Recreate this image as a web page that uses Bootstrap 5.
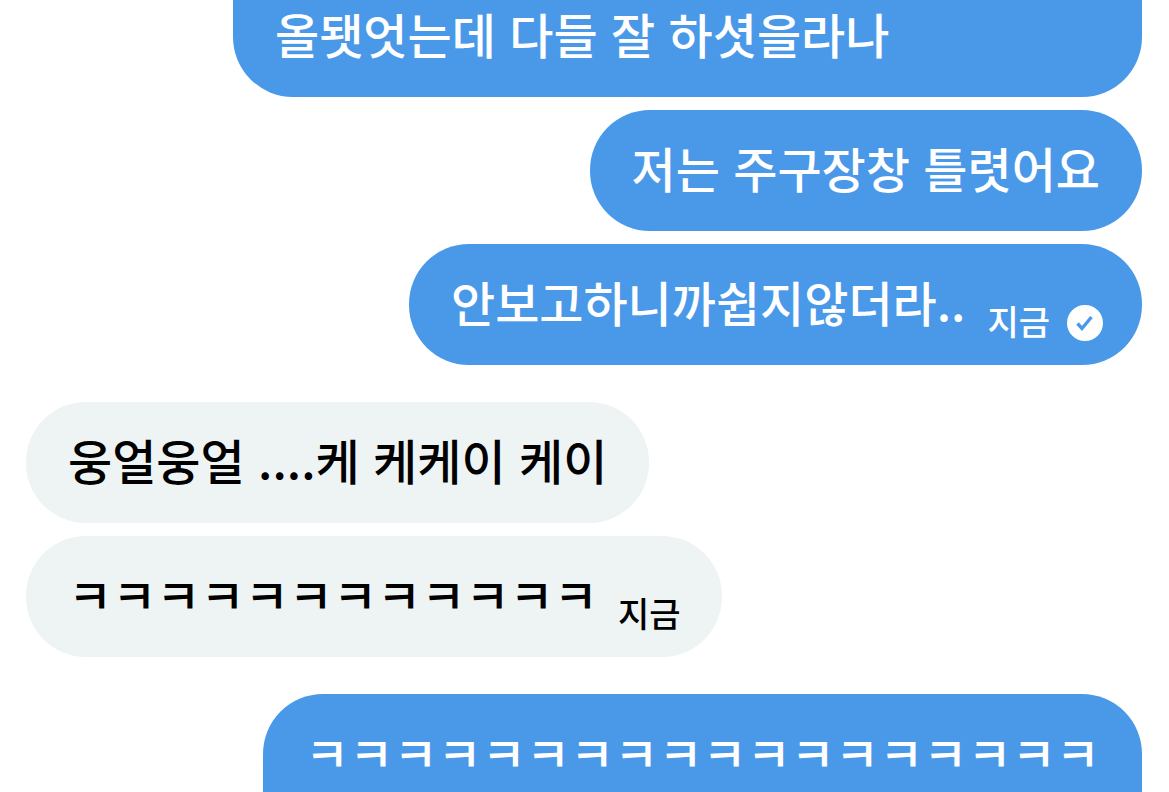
<!DOCTYPE html>
<html lang="ko">
<head>
<meta charset="utf-8">
<meta name="viewport" content="width=device-width, initial-scale=1">
<title>대화</title>
<link href="https://cdn.jsdelivr.net/npm/bootstrap@5.3.0/dist/css/bootstrap.min.css" rel="stylesheet">
<style>
body{background:#fff;color:#000;font-family:"Noto Sans CJK KR",sans-serif}
.chat{padding:0 27px 0 26px;gap:13px;height:100vh;overflow:hidden}
.bubble{flex:none;border-radius:60px;padding:27px 42px 34px;font-size:48px;line-height:60px;font-weight:500;white-space:nowrap}
.sent{background:#4a99e9;color:#fff}
.received{background:#eef3f4}
.turn{margin-top:24px}
/* long messages that run past the top and bottom of the view */
.from-above{width:100%;max-width:909px;padding-top:3px;border-top-left-radius:0;border-top-right-radius:0}
.to-below{min-height:181px}
.stamped{min-height:121px;padding-bottom:22px;gap:20px}
.stamp{min-height:40px;font-size:34px;line-height:36px;gap:17px}
.sent.stamped{padding-right:39px;gap:22px}
</style>
</head>
<body>
<main class="chat d-flex flex-column align-items-start">
<div class="bubble sent from-above align-self-end">올됏엇는데 다들 잘 하셧을라나</div>
<div class="bubble sent align-self-end">저는 주구장창 틀렷어요</div>
<div class="bubble sent stamped align-self-end d-flex"><span>안보고하니까쉽지않더라..</span><span class="stamp d-flex align-self-end">지금 <svg class="align-self-center" width="36" height="36" viewBox="0 0 36 36" role="img" aria-label="읽음"><circle cx="18" cy="18" r="18" fill="#fff"/><path d="M10.500 18.500l4.500 5 9.500-11.500" fill="none" stroke="#4a99e9" stroke-width="3.400"/></svg></span></div>
<div class="bubble received turn">웅얼웅얼 ....케 케케이 케이</div>
<div class="bubble received stamped d-flex"><span>ㅋㅋㅋㅋㅋㅋㅋㅋㅋㅋㅋㅋ</span><span class="stamp d-flex align-self-end">지금</span></div>
<div class="bubble sent to-below align-self-end turn">ㅋㅋㅋㅋㅋㅋㅋㅋㅋㅋㅋㅋㅋㅋㅋㅋㅋㅋ</div>
</main>
<script src="https://cdn.jsdelivr.net/npm/bootstrap@5.3.0/dist/js/bootstrap.bundle.min.js"></script>
</body>
</html>
